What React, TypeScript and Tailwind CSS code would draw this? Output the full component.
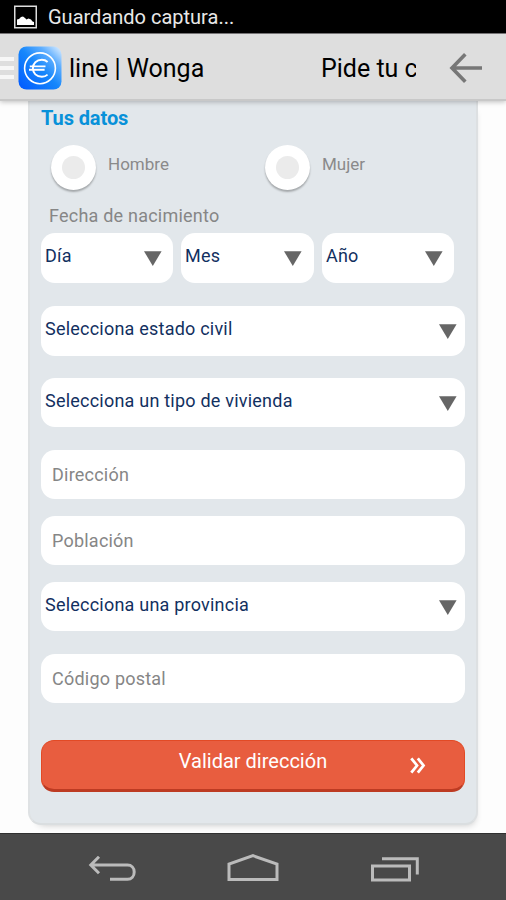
import React from 'react';

function Caret() {
  return (
    <svg className="h-4 w-[18px] shrink-0" viewBox="0 0 18 16">
      <path d="M0 0.2H17.6L8.8 15Z" fill="#666" />
    </svg>
  );
}

interface FieldProps {
  label: string;
  className?: string;
}

function SelectField({ label, className = '' }: FieldProps) {
  return (
    <div className={`flex justify-between rounded-[14px] bg-white pl-1 text-[18px] leading-6 text-[#12305f] ${className}`}>
      <span className="pt-[11px] tracking-[0.22px] whitespace-nowrap">{label}</span>
      <div className="pt-[18px]">
        <Caret />
      </div>
    </div>
  );
}

function TextField({ label, className = '' }: FieldProps) {
  return (
    <div className={`flex h-[49px] items-center rounded-[14px] bg-white pl-[11px] text-[18px] leading-6 text-[#868686] ${className}`}>
      <span className="tracking-[0.22px]">{label}</span>
    </div>
  );
}

function RadioOption({ label }: { label: string }) {
  return (
    <div className="flex w-[214px] shrink-0">
      <div className="flex h-[45px] w-[45px] shrink-0 items-center justify-center rounded-full bg-white shadow-[0_2px_2px_rgba(0,0,0,0.28)]">
        <div className="h-[23px] w-[23px] rounded-full bg-[#ebebeb]" />
      </div>
      <span className="ml-3 pt-[7px] text-[17px] leading-6 text-[#8a8a8a]">{label}</span>
    </div>
  );
}

function StatusBar() {
  return (
    <div className="flex h-[33px] items-center bg-black pl-[14px] text-[20px] text-[#e8e8e8]">
      <svg className="h-[24px] w-[23px]" viewBox="0 0 23 24">
        <rect x="0.75" y="1.25" width="21.5" height="21.5" fill="none" stroke="#ddd" strokeWidth="1.5" />
        <path d="M3 20V14.5L5 14L7 12L9 11.5L11 13L12.5 14.5L14.5 13.5L17 14.5L18.5 16.5L20 17V20Z" fill="#fff" />
      </svg>
      <span className="ml-[11px]">Guardando captura...</span>
    </div>
  );
}

function TitleBar() {
  return (
    <div className="relative z-10 flex h-[68px] items-center border-t border-b-2 border-t-[#757375] border-b-[#c8c8c8] bg-[#dedede] pt-[2px] shadow-[0_1px_5px_rgba(0,0,0,0.25)]">
      <div className="flex w-[14px] flex-col gap-[5px]">
        <div className="h-1 bg-[#f7f7f7]" />
        <div className="h-1 bg-[#f7f7f7]" />
        <div className="h-1 bg-[#f7f7f7]" />
      </div>
      <svg className="ml-1 h-[44px] w-[44px] shrink-0" viewBox="0 0 44 44">
        <defs>
          <linearGradient id="tile" x1="0" y1="1" x2="1" y2="0">
            <stop offset="0" stopColor="#0058ff" />
            <stop offset="0.5" stopColor="#1687fb" />
            <stop offset="0.75" stopColor="#5eaeff" />
            <stop offset="1" stopColor="#e5f2ff" />
          </linearGradient>
        </defs>
        <rect x="0.5" y="0.5" width="43" height="43" rx="8" fill="url(#tile)" />
        <circle cx="22" cy="22.3" r="15.4" fill="none" stroke="#fff" strokeWidth="1.6" />
        <path d="M29.6 16C28 14.5 26.1 13.8 23.9 13.8C18.4 13.8 14.9 17.4 14.9 22.3C14.9 27.2 18.4 30.8 23.9 30.8C26.1 30.8 28 30.1 29.6 28.6M11.8 20.4H27.5M11 23.8H26.6" fill="none" stroke="#fff" strokeWidth="1.9" />
      </svg>
      <div className="ml-[7px] flex w-[347px] justify-between overflow-hidden pt-[2px] text-[25px] whitespace-nowrap text-black">
        <span>line | Wonga</span>
        <span className="w-[95px] overflow-hidden">Pide tu crédito</span>
      </div>
      <svg className="ml-[33px] h-[32px] w-[34px]" viewBox="0 0 34 32">
        <path d="M16.3 2.3L3 16L16.3 29.7M3 16H33" fill="none" stroke="#777" strokeWidth="3.6" />
      </svg>
    </div>
  );
}

function NavBar() {
  return (
    <div className="flex h-[67px] items-start border-t border-[#303030] bg-[#494949]">
      <svg className="mt-[22px] ml-[88px] h-[28px] w-[49px]" viewBox="0 0 49 28">
        <path d="M11 0.8L2.8 9L11 17.2M3 9H39.5C43.5 9 46.2 11.8 46.2 16C46.2 20.3 43.5 23.3 39.5 23.3H22" fill="none" stroke="#bbb" strokeWidth="3" />
      </svg>
      <svg className="mt-[19px] ml-[90px] h-[30px] w-[53px]" viewBox="0 0 53 30">
        <path d="M2 26.5V11L26 2.7L50 11V26.5Z" fill="none" stroke="#bbb" strokeWidth="3" />
      </svg>
      <svg className="mt-[21px] ml-[90px] h-[28px] w-[50px]" viewBox="0 0 50 28">
        <path d="M2.5 11H39.5V25H2.5ZM12 3.8H47.3V19.5" fill="none" stroke="#bbb" strokeWidth="3" />
      </svg>
    </div>
  );
}

export default function App() {
  return (
    <div className="flex h-[900px] w-[506px] flex-col overflow-hidden bg-[#fdfdfd] font-['Roboto',sans-serif]">
      <StatusBar />
      <TitleBar />
      <div className="flex-1 px-7">
        <div className="flex h-[724px] flex-col rounded-b-[13px] border-x-2 border-b-2 border-l-[#dfe2e4] border-r-[#dde0e2] border-b-[#dadee0] bg-[#e2e7eb] px-[11px] shadow-[3px_6px_7px_-6px_rgba(0,0,0,0.22)]">
          <h2 className="pt-[5px] text-[20px] leading-6 font-bold tracking-[-0.1px] text-[#0891d9]">Tus datos</h2>
          <div className="mt-[15px] flex pl-[10px]">
            <RadioOption label="Hombre" />
            <RadioOption label="Mujer" />
          </div>
          <p className="mt-[14px] pl-2 text-[18px] leading-6 tracking-[0.22px] text-[#868686]">Fecha de nacimiento</p>
          <div className="mt-[5px] flex gap-2">
            <SelectField label="Día" className="h-[50px] w-[132px] pr-[11px]" />
            <SelectField label="Mes" className="h-[50px] w-[133px] pr-[12px]" />
            <SelectField label="Año" className="h-[50px] w-[132px] pr-[11px]" />
          </div>
          <SelectField label="Selecciona estado civil" className="mt-[23px] h-[50px] pr-[8px]" />
          <SelectField label="Selecciona un tipo de vivienda" className="mt-[22px] h-[49px] pr-[8px]" />
          <TextField label="Dirección" className="mt-[23px]" />
          <TextField label="Población" className="mt-[17px]" />
          <SelectField label="Selecciona una provincia" className="mt-[17px] h-[49px] pr-[8px]" />
          <TextField label="Código postal" className="mt-[23px]" />
          <button
            type="button"
            className="relative mt-[37px] flex h-[52px] items-start justify-center rounded-[13px] border border-b-[3px] border-[#e24a25] border-b-[#bd3b22] bg-[#e85d3f] text-[20px] text-white"
          >
            <span className="pt-[8px] leading-6">Validar dirección</span>
            <svg className="absolute top-[16px] right-[38px] h-[17px] w-[17px]" viewBox="0 0 17 17">
              <path d="M2.3 1.3L8 8.5L2.3 15.7M8.8 1.3L14.5 8.5L8.8 15.7" fill="none" stroke="#fff" strokeWidth="2.8" />
            </svg>
          </button>
        </div>
      </div>
      <NavBar />
    </div>
  );
}
